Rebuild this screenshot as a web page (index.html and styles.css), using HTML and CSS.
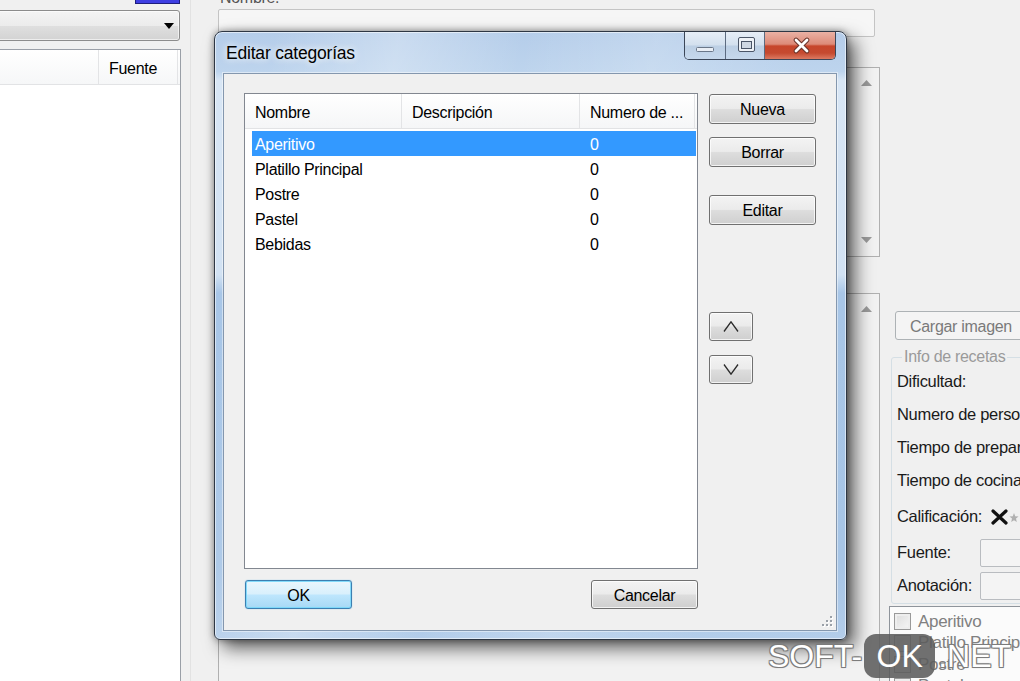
FILE: index.html
```html
<!DOCTYPE html>
<html lang="es">
<head>
<meta charset="utf-8">
<title>Editar categorías</title>
<link rel="stylesheet" href="styles.css">
</head>
<body>
<div class="screen">
  <aside class="left">
    <div class="topmark"></div>
    <div class="combo">
      <svg class="combo-arrow" width="10" height="6" viewBox="0 0 10 6"><path d="M0 0H10L5 6Z" fill="#000"/></svg>
    </div>
    <div class="flist">
      <div class="fhead">
        <span class="fc1"></span>
        <span class="fc2">Fuente</span>
      </div>
    </div>
  </aside>
  <div class="split"></div>
  <main class="main">
    <div class="lbl-nombre">Nombre:</div>
    <div class="mrow">
      <div class="col-left">
        <div class="input-nombre"></div>
        <div class="panel p1">
          <div class="vscroll">
            <svg width="11" height="6" viewBox="0 0 11 6"><path d="M0 6L5.5 0L11 6Z" fill="#9a9a9a"/></svg>
            <svg width="11" height="6" viewBox="0 0 11 6"><path d="M0 0L5.5 6L11 0Z" fill="#9a9a9a"/></svg>
          </div>
        </div>
        <div class="panel p2">
          <div class="vscroll">
            <svg width="11" height="6" viewBox="0 0 11 6"><path d="M0 6L5.5 0L11 6Z" fill="#9a9a9a"/></svg>
          </div>
        </div>
      </div>
      <div class="col-right">
        <div class="btn-dis">Cargar imagen</div>
        <fieldset class="gbox">
          <legend>Info de recetas</legend>
          <div class="prow r-a">Dificultad:</div>
          <div class="prow r-b">Numero de personas:</div>
          <div class="prow r-c">Tiempo de preparación:</div>
          <div class="prow r-c">Tiempo de cocina:</div>
          <div class="prow r-d">Calificación:
            <svg class="xicon" width="17" height="16" viewBox="0 0 17 16"><path d="M2 2L15 14M15 2L2 14" stroke="#111" stroke-width="3.2" stroke-linecap="round"/></svg>
            <svg class="star" width="10" height="12" viewBox="0 0 10 12"><path d="M5 2L6.2 5.2L9.5 5.5L7 7.6L7.8 11L5 9.2L2.2 11L3 7.6L0.5 5.5L3.8 5.2Z" fill="#b0b0b0"/></svg>
          </div>
          <div class="prow r-e"><span class="plbl">Fuente:</span><span class="tbox"></span></div>
          <div class="prow r-e"><span class="plbl">Anotación:</span><span class="tbox"></span></div>
        </fieldset>
        <div class="clist">
          <div class="citem"><span class="cbox"></span>Aperitivo</div>
          <div class="citem"><span class="cbox"></span>Platillo Principal</div>
          <div class="citem"><span class="cbox"></span>Postre</div>
          <div class="citem"><span class="cbox"></span>Pastel</div>
        </div>
      </div>
    </div>
  </main>
</div>

<div class="dialog">
  <div class="titlebar">
    <span class="title">Editar categorías</span>
    <div class="caption">
      <span class="cbtn cmin">
        <svg width="40" height="27" viewBox="0 0 40 27"><rect x="11.5" y="15.5" width="17" height="4" rx="1" fill="#e9eef5" stroke="#6a7789"/></svg>
      </span>
      <span class="cbtn cmax">
        <svg width="38" height="27" viewBox="0 0 38 27"><rect x="12.5" y="5.5" width="16" height="14" rx="1.5" fill="#eef2f7" stroke="#4b5668"/><rect x="15.5" y="9.5" width="10" height="7" fill="#cfd8e3" stroke="#4b5668"/></svg>
      </span>
      <span class="cbtn cclose">
        <svg width="70" height="27" viewBox="0 0 70 27"><path d="M31 8L42 19M42 8L31 19" stroke="#6a3329" stroke-width="4.8" stroke-linecap="round"/><path d="M31 8L42 19M42 8L31 19" stroke="#ffffff" stroke-width="2.8" stroke-linecap="round"/></svg>
      </span>
    </div>
  </div>
  <div class="client">
    <div class="dbody">
      <div class="lv">
        <div class="lvh">
          <span class="h1">Nombre</span>
          <span class="h2">Descripción</span>
          <span class="h3">Numero de ...</span>
          <span class="h4"></span>
        </div>
        <div class="lvrows">
          <div class="lvrow sel"><span class="r1">Aperitivo</span><span class="r2"></span><span class="r3">0</span></div>
          <div class="lvrow"><span class="r1">Platillo Principal</span><span class="r2"></span><span class="r3">0</span></div>
          <div class="lvrow"><span class="r1">Postre</span><span class="r2"></span><span class="r3">0</span></div>
          <div class="lvrow"><span class="r1">Pastel</span><span class="r2"></span><span class="r3">0</span></div>
          <div class="lvrow"><span class="r1">Bebidas</span><span class="r2"></span><span class="r3">0</span></div>
        </div>
      </div>
      <div class="side">
        <div class="btn b-nueva">Nueva</div>
        <div class="btn b-borrar">Borrar</div>
        <div class="btn b-editar">Editar</div>
        <div class="btn bsm b-up"><svg width="16" height="11" viewBox="0 0 16 11"><polyline points="1,10.5 8,0.8 15,10.5" fill="none" stroke="#2b2b2b" stroke-width="1.3"/></svg></div>
        <div class="btn bsm b-down"><svg width="16" height="11" viewBox="0 0 16 11"><polyline points="1,0.5 8,10.2 15,0.5" fill="none" stroke="#2b2b2b" stroke-width="1.3"/></svg></div>
      </div>
    </div>
    <div class="dfoot">
      <div class="btn bfoot ok">OK</div>
      <div class="btn bfoot">Cancelar</div>
    </div>
    <svg class="grip" width="12" height="12" viewBox="0 0 12 12">
      <g fill="#fff"><rect x="10" y="2" width="2" height="2"/><rect x="10" y="6" width="2" height="2"/><rect x="6" y="6" width="2" height="2"/><rect x="10" y="10" width="2" height="2"/><rect x="6" y="10" width="2" height="2"/><rect x="2" y="10" width="2" height="2"/></g>
      <g fill="#9aa0a8"><rect x="9" y="1" width="2" height="2"/><rect x="9" y="5" width="2" height="2"/><rect x="5" y="5" width="2" height="2"/><rect x="9" y="9" width="2" height="2"/><rect x="5" y="9" width="2" height="2"/><rect x="1" y="9" width="2" height="2"/></g>
    </svg>
  </div>
</div>

<div class="wm">
  <span class="wt">SOFT-</span>
  <span class="wok">OK</span>
  <span class="wt">.NET</span>
</div>
</body>
</html>
```

FILE: styles.css
```css
* { box-sizing: border-box; }
html, body { margin: 0; padding: 0; }
body {
  width: 1020px;
  height: 681px;
  overflow: hidden;
  position: relative;
  background: #f0f0f0;
  font-family: "Liberation Sans", Arial, sans-serif;
  font-size: 16px;
  letter-spacing: -0.3px;
  color: #000;
}

/* ---------- background application ---------- */
.screen { display: flex; height: 681px; }

.left { width: 181px; flex: none; }
.topmark {
  margin-left: 135px;
  width: 45px;
  height: 4px;
  background: #3e3ee2;
  border: 1px solid #1d1d7c;
  border-top: none;
}
.combo {
  margin-top: 6px;
  margin-left: -4px;
  width: 184px;
  height: 31px;
  border: 1px solid #8c8c8c;
  border-radius: 3px;
  background: linear-gradient(#f4f4f4 0%, #ececec 50%, #dfdfdf 52%, #d3d3d3 100%);
  box-shadow: inset 0 0 0 1px rgba(255,255,255,0.6);
  display: flex;
  align-items: center;
  justify-content: flex-end;
  padding-right: 5px;
}
.flist {
  margin-top: 8px;
  width: 181px;
  height: 640px;
  background: #fff;
  border-top: 1px solid #9a9fa7;
  border-right: 1px solid #9a9fa7;
}
.fhead {
  display: flex;
  height: 35px;
  background: linear-gradient(#ffffff, #f6f7f8);
  border-bottom: 1px solid #e2e3e5;
}
.fc1 { width: 99px; border-right: 1px solid #e3e4e6; }
.fc2 {
  width: 79px;
  padding: 4px 0 0 10px;
  line-height: 30px;
  border-right: 1px solid #e3e4e6;
}

.split {
  width: 37px;
  flex: none;
  background: linear-gradient(90deg, transparent 9px, #e2e2e2 9px, #e2e2e2 10px, transparent 10px);
}

.main { flex: 1; min-width: 0; }
.lbl-nombre {
  margin-top: -8px;
  height: 12px;
  line-height: 12px;
  padding-left: 2px;
  color: #555;
}
.mrow { display: flex; }
.col-left { width: 662px; flex: none; }
.input-nombre {
  margin-top: 5px;
  width: 657px;
  height: 28px;
  border: 1px solid #c4c4c4;
  border-radius: 2px;
  background: #f6f6f6;
}
.panel {
  border: 1px solid #b0b0b0;
  background: #f2f2f2;
  display: flex;
  justify-content: flex-end;
}
.p1 { margin-top: 30px; height: 190px; }
.p2 { margin-top: 36px; height: 400px; }
.vscroll {
  width: 25px;
  display: flex;
  flex-direction: column;
  justify-content: space-between;
  align-items: center;
  padding: 12px 0 13px;
}

.col-right { width: 140px; flex: none; padding-top: 307px; }
.btn-dis {
  margin-left: 15px;
  width: 140px;
  height: 29px;
  line-height: 29px;
  padding-left: 14px;
  border: 1px solid #adb2b5;
  border-radius: 3px;
  background: #f4f4f4;
  color: #7a7a7a;
  font-size: 16px;
  white-space: nowrap;
}
.gbox {
  margin: 8px 0 0 11px;
  width: 170px;
  padding: 0 0 1px 5px;
  border: 1px solid #d5dfe5;
  border-radius: 3px;
  min-width: 0;
}
.gbox legend {
  margin-left: 5px;
  padding: 0 2px;
  line-height: 18px;
  color: #9a9a9a;
  font-size: 16px;
}
.prow {
  display: flex;
  align-items: center;
  white-space: nowrap;
  font-size: 16.5px;
  color: #1a1a1a;
  height: 33px;
}
.r-a { height: 31px; }
.r-b { height: 34px; }
.r-d { height: 39px; }
.xicon { margin-left: 9px; flex: none; }
.star { margin-left: 1px; flex: none; }
.plbl { width: 83px; flex: none; }
.tbox {
  width: 60px;
  height: 28px;
  flex: none;
  border: 1px solid #b9bcc0;
  border-radius: 2px;
  background: #f4f4f4;
}
.clist {
  margin: 2px 0 0 9px;
  width: 170px;
  height: 90px;
  padding: 4px 0 0 4px;
  border: 1px solid #8f949b;
  background: #fbfbfb;
}
.citem {
  display: flex;
  align-items: center;
  height: 21.5px;
  font-size: 17px;
  color: #808080;
  white-space: nowrap;
}
.cbox {
  width: 17px;
  height: 17px;
  margin-right: 7px;
  flex: none;
  border: 1px solid #999;
  background: linear-gradient(135deg, #dcdcdc, #f7f7f7);
  box-shadow: inset 0 0 0 2px #eeeeee;
}

/* ---------- dialog ---------- */
.dialog {
  position: absolute;
  left: 214px;
  top: 31px;
  width: 633px;
  height: 609px;
  border: 1px solid #2e3744;
  border-radius: 8px 8px 6px 6px;
  padding: 0 9px 8px 8px;
  background:
    linear-gradient(100deg, rgba(255,255,255,0) 8%, rgba(255,255,255,0.28) 25%, rgba(255,255,255,0) 42%, rgba(255,255,255,0.18) 60%, rgba(255,255,255,0) 80%),
    linear-gradient(180deg, #b5cdea 0%, #bdd4ed 6.5%, #d8e6f5 8%, #d2e2f3 40%, #a8c6e7 43%, #a7c5e6 88%, #b3cdea 100%);
  box-shadow: inset 0 0 0 1px rgba(255,255,255,0.55), 8px 8px 18px rgba(0,0,0,0.62), 0 0 7px rgba(0,0,0,0.4);
}
.titlebar {
  height: 41px;
  display: flex;
  justify-content: space-between;
  align-items: flex-start;
}
.title {
  margin: 11px 0 0 3px;
  font-size: 17.5px;
  letter-spacing: -0.2px;
  line-height: 20px;
  color: #000;
  text-shadow: 0 0 6px rgba(255,255,255,0.9), 0 0 10px rgba(255,255,255,0.6);
}
.caption {
  display: flex;
  margin-right: 1px;
  height: 28px;
  border: 1px solid #3b4658;
  border-top: none;
  border-radius: 0 0 5px 5px;
  overflow: hidden;
}
.cbtn { display: block; height: 27px; }
.cmin, .cmax {
  background: linear-gradient(#e6eef7 0%, #d3e0ee 48%, #bccfe4 52%, #c6d8ec 100%);
  border-right: 1px solid #5c6b80;
}
.cmin { width: 41px; }
.cmax { width: 39px; }
.cclose {
  width: 70px;
  background: linear-gradient(#eab1a4 0%, #dd8a78 45%, #c7452b 52%, #c54a30 78%, #dc7a62 100%);
}
.cbtn svg { display: block; }

.client {
  position: relative;
  width: 614px;
  height: 558px;
  border: 1px solid #8497ae;
  background: #f0f0f0;
  padding: 19px 0 0 20px;
  box-shadow: 0 0 0 1px rgba(255,255,255,0.45);
}
.dbody { display: flex; gap: 11px; }
.lv {
  width: 454px;
  height: 476px;
  flex: none;
  border: 1px solid #828790;
  background: #fff;
}
.lvh {
  display: flex;
  height: 35px;
  background: linear-gradient(#ffffff, #f5f6f7);
  border-bottom: 1px solid #e2e3e5;
}
.lvh span {
  display: block;
  height: 34px;
  line-height: 30px;
  padding: 4px 0 0 10px;
  border-right: 1px solid #e3e4e6;
  white-space: nowrap;
}
.lvh .h1 { width: 157px; }
.lvh .h2 { width: 178px; }
.lvh .h3 { width: 115px; }
.lvh .h4 { flex: 1; border-right: none; padding: 0; }
.lvrows { padding-top: 2px; }
.lvrow {
  display: flex;
  height: 25px;
  line-height: 27px;
  margin-left: 7px;
  width: 444px;
  white-space: nowrap;
}
.lvrow .r1 { width: 150px; padding-left: 3px; }
.lvrow .r2 { width: 178px; }
.lvrow .r3 { padding-left: 10px; }
.lvrow.sel { background: #3399ff; color: #fff; }

.side {
  width: 107px;
  flex: none;
  display: flex;
  flex-direction: column;
  padding-top: 1px;
}
.btn {
  display: flex;
  align-items: center;
  justify-content: center;
  height: 30px;
  padding-top: 2px;
  border: 1px solid #707070;
  border-radius: 3px;
  background: linear-gradient(#f3f3f3 0%, #ebebeb 48%, #dddddd 52%, #cfcfcf 100%);
  box-shadow: inset 0 0 0 1px rgba(255,255,255,0.75);
  color: #000;
}
.b-borrar { margin-top: 13px; }
.b-editar { margin-top: 28px; }
.bsm { width: 44px; height: 29px; padding-top: 0; }
.b-up { margin-top: 87px; }
.b-down { margin-top: 14px; }
.bsm svg { display: block; }

.dfoot {
  display: flex;
  justify-content: space-between;
  width: 453px;
  margin: 11px 0 0 1px;
}
.bfoot { width: 107px; height: 29px; }
.ok {
  border-color: #3c7fb1;
  background: linear-gradient(#eaf6fd 0%, #d9f0fc 48%, #bee6fd 52%, #a7d9f5 100%);
  box-shadow: inset 0 0 0 1px rgba(120,215,250,0.9), 0 0 1px rgba(60,170,230,0.8);
}
.grip { position: absolute; right: 3px; bottom: 3px; }

/* ---------- watermark ---------- */
.wm {
  position: absolute;
  left: 768px;
  top: 634px;
  height: 44px;
  display: flex;
  align-items: center;
  font-family: "Liberation Sans", Arial, sans-serif;
  font-size: 32px;
  letter-spacing: 0;
  color: #fff;
}
.wt {
  text-shadow: -1px -1px 0 #7c7c7c, 1px -1px 0 #7c7c7c, -1px 1px 0 #7c7c7c, 1px 1px 0 #7c7c7c, 0 0 2px #666;
}
.wok {
  width: 71px;
  height: 44px;
  margin: 0 3px 0 2px;
  display: flex;
  align-items: center;
  justify-content: center;
  border-radius: 12px;
  background: rgba(92,92,92,0.88);
}
```
